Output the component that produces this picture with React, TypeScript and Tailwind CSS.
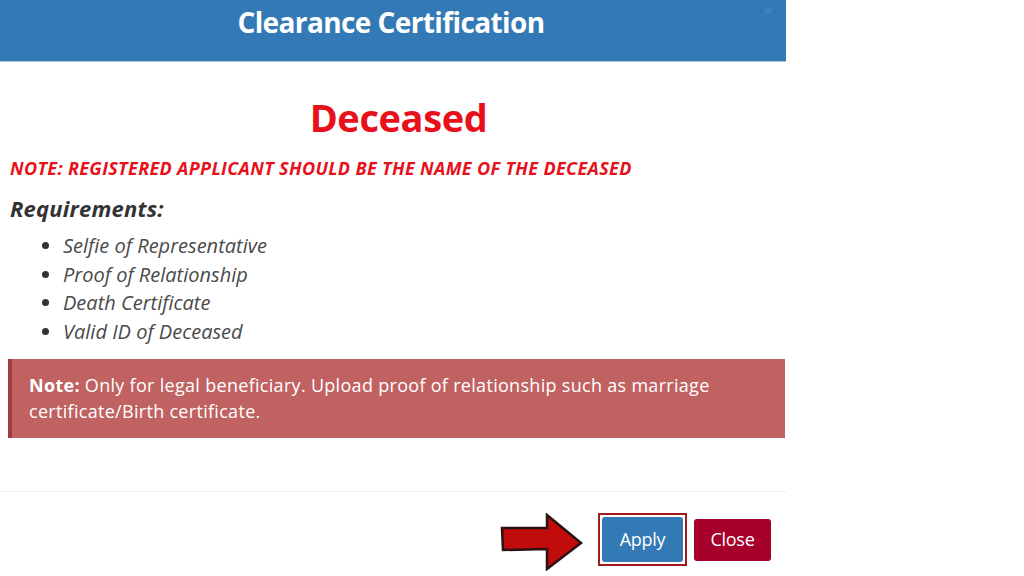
import { X } from 'lucide-react';

const requirements = [
  'Selfie of Representative',
  'Proof of Relationship',
  'Death Certificate',
  'Valid ID of Deceased',
];

function PointerArrow() {
  return (
    <svg width="84" height="58" viewBox="0 0 84 58" className="mr-[14px]">
      <path
        d="M2 15 L47 15 L47 2 L81 30 L47 56 L47 36 L3 37 Z"
        fill="#c20b0b"
        stroke="#2a1212"
        strokeWidth="2.5"
        strokeLinejoin="miter"
      />
    </svg>
  );
}

export default function App() {
  return (
    <div
      className="flex h-[576px] w-[1024px] overflow-hidden bg-white"
      style={{ fontFamily: '"Open Sans", "Noto Sans", sans-serif' }}
    >
      <div className="flex w-[786px] flex-col bg-white">
        <div className="relative flex h-[62px] shrink-0 items-start justify-center border-b border-[#a9c6e3] bg-[#3379b5] pt-[3px]">
          <h1 className="pr-[4px] text-[28px] font-bold leading-[38px] tracking-[-0.6px] text-white">
            Clearance Certification
          </h1>
          <X className="absolute right-[12px] top-[5px] h-[12px] w-[12px] text-[#4b86bd]" strokeWidth={3} />
        </div>

        <div className="flex flex-1 flex-col px-[10px] pt-[35px]">
          <h2 className="pl-[11px] text-center text-[38px] font-bold leading-[40px] tracking-[-0.4px] text-[#e8101b]">
            Deceased
          </h2>
          <p className="mt-[19px] text-[18px] font-bold italic uppercase leading-[24px] tracking-[0.35px] text-[#e8101b]">
            Note: Registered applicant should be the name of the deceased
          </p>
          <h3 className="mt-[13px] text-[22px] font-bold italic leading-[30px] tracking-[0.2px] text-[#333333]">
            Requirements:
          </h3>
          <ul className="mt-[9px] list-disc pl-[53px] text-[20px] italic leading-[28.5px] text-[#4a4a4a] marker:text-[#333333]">
            {requirements.map((item) => (
              <li key={item}>{item}</li>
            ))}
          </ul>
          <div className="-ml-[2px] -mr-[9px] mt-[13px] border-l-4 border-[#a5393b] bg-[#c16262] pb-[14px] pl-[17px] pr-[20px] pt-[13px] text-[18px] leading-[26px] tracking-[0.3px] text-white">
            <span className="font-bold">Note:</span> Only for legal beneficiary. Upload proof of
            relationship such as marriage
            <br />
            certificate/Birth certificate.
          </div>
        </div>

        <div className="flex h-[85px] shrink-0 items-start justify-end border-t border-[#ededed] pr-[15px] pt-[21px]">
          <PointerArrow />
          <div className="flex items-center">
            <div className="mr-[7px] border-2 border-[#a11c1c] p-[2px]">
              <button className="h-[45px] w-[81px] rounded-[3px] bg-[#3379b5] text-[18px] tracking-[-0.3px] text-white">
                Apply
              </button>
            </div>
            <button className="h-[42px] w-[77px] rounded-[3px] bg-[#a6002b] text-[18px] tracking-[-0.3px] text-white">
              Close
            </button>
          </div>
        </div>
      </div>
    </div>
  );
}
